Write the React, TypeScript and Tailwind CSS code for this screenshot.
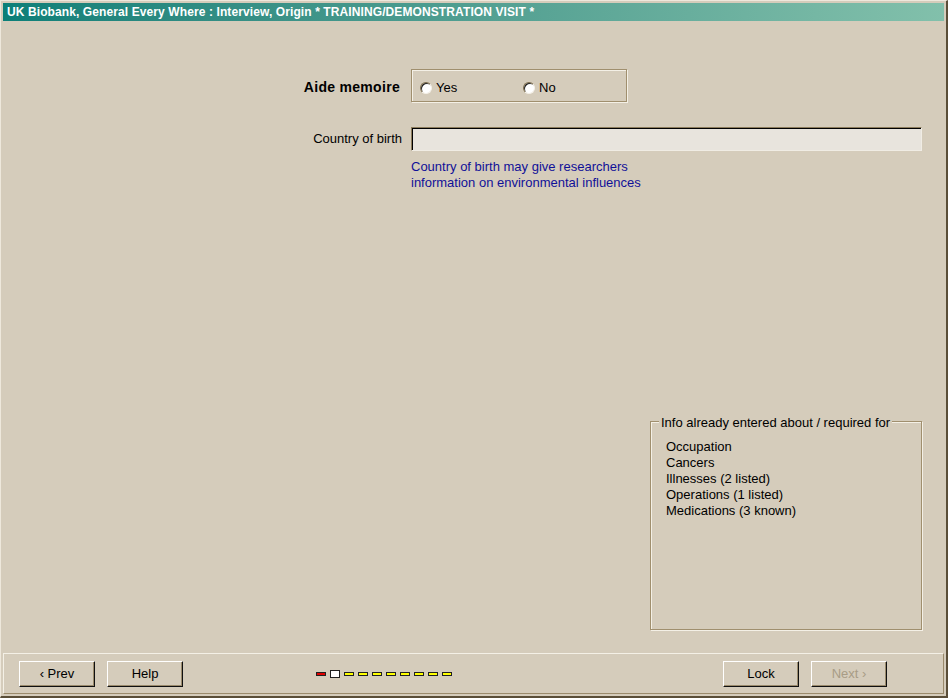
import React from "react";

const items = [
  "Occupation",
  "Cancers",
  "Illnesses (2 listed)",
  "Operations (1 listed)",
  "Medications (3 known)",
];

function Radio({ label }: { label: string }) {
  return (
    <label className="flex items-center gap-[4px]">
      <span className="w-[12px] h-[12px] rounded-full bg-white border border-t-[#7a6a4a] border-l-[#7a6a4a] border-r-[#f4f0e8] border-b-[#f4f0e8] shadow-[inset_1px_1px_0_#202020]" />
      <span>{label}</span>
    </label>
  );
}

function Button({ children, disabled }: { children: React.ReactNode; disabled?: boolean }) {
  return (
    <button
      className={
        "w-[76px] h-[26px] bg-[#d5ccbb] border border-t-white border-l-white border-r-[#101010] border-b-[#101010] shadow-[inset_-1px_-1px_0_#9a8a6c] text-[13px] " +
        (disabled ? "text-[#a89c86]" : "text-black")
      }
    >
      {children}
    </button>
  );
}

export default function App() {
  return (
    <div
      className="w-[948px] h-[698px] bg-[#d5ccbb] flex flex-col border-t border-l border-t-[#eee8dc] border-l-[#eee8dc] border-r-2 border-b-2 border-r-[#5a4e38] border-b-[#5a4e38] text-black"
      style={{ fontFamily: '"Liberation Sans", Arial, sans-serif' }}
    >
      <div className="mx-[2px] mt-[2px] h-[18px] flex items-center px-[4px] bg-gradient-to-r from-[#0a7f78] to-[#82c0ab] text-white font-bold text-[12px] tracking-[0.1px]">
        UK Biobank, General Every Where : Interview, Origin * TRAINING/DEMONSTRATION VISIT *
      </div>

      <div className="flex-1 flex flex-col text-[13px]">
        <div className="flex items-center mt-[48px]">
          <div className="w-[400px] text-right font-bold text-[14px] tracking-[0.3px] pr-[1px] pt-[3px]">Aide memoire</div>
          <div className="ml-[10px] w-[216px] h-[33px] flex items-center pl-[8px] pt-[5px] border border-[#a08f6e] shadow-[inset_1px_1px_0_#f4f0e6,1px_1px_0_#f4f0e6] text-[13px]">
            <div className="w-[103px]"><Radio label="Yes" /></div>
            <Radio label="No" />
          </div>
        </div>

        <div className="flex items-center mt-[25px]">
          <div className="w-[401px] text-right">Country of birth</div>
          <div className="ml-[9px] w-[511px] h-[24px] bg-[#e8e4dd] border border-t-[#8c7c5c] border-l-[#8c7c5c] border-r-[#f0ece4] border-b-[#f0ece4] shadow-[inset_1px_1px_0_#000]" />
        </div>

        <div className="ml-[410px] mt-[8px] text-[#101098] leading-[16px]">
          <div>Country of birth may give researchers</div>
          <div>information on environmental influences</div>
        </div>

        <div className="flex justify-end mr-[24px] mt-[230px]">
          <div className="relative w-[272px] h-[209px] border border-[#a08f6e] shadow-[inset_1px_1px_0_#f4f0e6,1px_1px_0_#f4f0e6]">
            <div className="absolute left-[8px] top-[-7px] px-[2px] bg-[#d5ccbb] leading-[16px]">
              Info already entered about / required for
            </div>
            <div className="pt-[17px] pl-[15px] leading-[16px]">
              {items.map((t) => (
                <div key={t}>{t}</div>
              ))}
            </div>
          </div>
        </div>
      </div>

      <div className="mx-[2px] mb-[2px] h-[41px] flex items-center px-[15px] border-t border-l border-t-[#f4f0e6] border-l-[#f4f0e6] border-r border-b border-r-[#9a8a6c] border-b-[#9a8a6c]">
        <Button>‹ Prev</Button>
        <div className="ml-[12px]"><Button>Help</Button></div>
        <div className="ml-[133px] flex items-center gap-[4px]">
          <span className="w-[8px] h-[2px] bg-[#e00000] border border-[#202020] box-content" />
          <span className="w-[8px] h-[6px] bg-white border border-[#202020] box-content" />
          {Array.from({ length: 8 }).map((_, i) => (
            <span key={i} className="w-[8px] h-[2px] bg-[#ffff00] border border-[#202020] box-content" />
          ))}
        </div>
        <div className="flex-1" />
        <Button>Lock</Button>
        <div className="ml-[12px] mr-[41px]"><Button disabled>Next ›</Button></div>
      </div>
    </div>
  );
}
